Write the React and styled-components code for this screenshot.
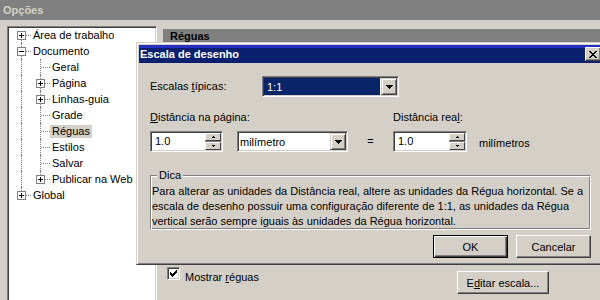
import styled, { createGlobalStyle, css } from "styled-components";

const GlobalStyle = createGlobalStyle`
  html, body {
    margin: 0;
    padding: 0;
    background: #d4d0c8;
  }
  body {
    font-family: "Liberation Sans", Arial, sans-serif;
    font-size: 11px;
    color: #000;
  }
`;

const raised = css`
  border: 1px solid;
  border-color: #fff #404040 #404040 #fff;
  box-shadow: inset -1px -1px #808080;
`;

const sunken = css`
  border: 1px solid;
  border-color: #808080 #fff #fff #808080;
  box-shadow: inset 1px 1px #404040, inset -1px -1px #d4d0c8;
`;

const Screen = styled.div`
  position: relative;
  width: 600px;
  height: 300px;
  overflow: hidden;
  background: #d4d0c8;
  display: flex;
  flex-direction: column;
`;

const WindowTitle = styled.div`
  flex-shrink: 0;
  height: 20px;
  padding-left: 3px;
  display: flex;
  align-items: center;
  background: #808080;
  color: #d4d0c8;
  font-weight: bold;
`;

const WindowBody = styled.div`
  flex: 1;
  min-height: 0;
  display: flex;
  gap: 6px;
  padding: 6px 0 0 7px;
`;

const Tree = styled.div`
  box-sizing: border-box;
  flex-shrink: 0;
  width: 150px;
  height: 290px;
  padding: 0 0 0 4px;
  background: #fff;
  ${sunken};
`;

const TreeRow = styled.div`
  display: flex;
  align-items: center;
  height: 16px;
`;

const TreeCell = styled.div`
  position: relative;
  flex-shrink: 0;
  width: 19px;
  height: 16px;
  display: flex;
  align-items: center;
  justify-content: center;

  &::before {
    content: "";
    display: ${(p) => (p.$up || p.$down ? "block" : "none")};
    position: absolute;
    left: 9px;
    top: ${(p) => (p.$up ? 0 : 8)}px;
    bottom: ${(p) => (p.$down ? 0 : 8)}px;
    border-left: 1px dotted #808080;
  }

  &::after {
    content: "";
    display: ${(p) => (p.$branch ? "block" : "none")};
    position: absolute;
    left: 10px;
    right: 0;
    top: 8px;
    border-top: 1px dotted #808080;
  }

  svg {
    position: relative;
    z-index: 1;
  }
`;

const TreeLabel = styled.span`
  padding: 0 2px;
  line-height: 13px;
  white-space: nowrap;
  background: ${(p) => (p.$selected ? "#d4d0c8" : "transparent")};
`;

const RightPane = styled.div`
  flex: 1;
  min-width: 0;
  padding-top: 3px;
  display: flex;
  flex-direction: column;
`;

const PaneHeader = styled.div`
  height: 14px;
  padding-left: 7px;
  display: flex;
  align-items: center;
  background: #808080;
  font-weight: bold;
`;

const PaneContent = styled.div`
  height: 224px;
`;

const PaneFooter = styled.div`
  display: flex;
  align-items: flex-start;
  padding-left: 4px;
`;

const CheckRow = styled.label`
  display: flex;
  align-items: flex-start;
  gap: 5px;
`;

const CheckBox = styled.span`
  box-sizing: border-box;
  width: 13px;
  height: 13px;
  display: flex;
  align-items: center;
  justify-content: center;
  background: #fff;
  ${sunken};
`;

const CheckText = styled.span`
  margin-top: 4px;
  line-height: 13px;
`;

const Button = styled.button`
  box-sizing: border-box;
  width: ${(p) => p.$w || 75}px;
  height: 23px;
  padding: 0;
  margin: ${(p) => p.$margin || 0};
  background: #d4d0c8;
  color: #000;
  font: 11px "Liberation Sans", Arial, sans-serif;
  border: 1px solid;
  border-color: ${(p) => (p.$default ? "#000" : "#fff #404040 #404040 #fff")};
  box-shadow: ${(p) =>
    p.$default
      ? "inset 1px 1px #fff, inset -1px -1px #404040, inset -2px -2px #808080"
      : "inset -1px -1px #808080"};
`;

const Dialog = styled.div`
  position: absolute;
  left: 136px;
  top: 42px;
  box-sizing: border-box;
  width: 470px;
  height: 223px;
  padding: 2px;
  background: #d4d0c8;
  border: 1px solid;
  border-color: #d4d0c8 #404040 #404040 #d4d0c8;
  box-shadow: inset 1px 1px #fff, inset -1px -1px #808080;
  display: flex;
  flex-direction: column;
`;

const DialogTitle = styled.div`
  height: 18px;
  padding: 0 2px 0 1px;
  display: flex;
  align-items: center;
  justify-content: space-between;
  background: linear-gradient(#2430c4 0 3px, #0a1f6e 3px);
  color: #fff;
  font-weight: bold;
`;

const CloseButton = styled.span`
  box-sizing: border-box;
  width: 16px;
  height: 14px;
  display: flex;
  align-items: center;
  justify-content: center;
  background: #d4d0c8;
  ${raised};
`;

const DialogBody = styled.div`
  padding: 13px 12px 0 11px;
  display: flex;
  flex-direction: column;
`;

const ScaleRow = styled.div`
  display: flex;
  align-items: center;
  height: 21px;
`;

const FieldLabel = styled.div`
  width: ${(p) => (p.$w ? `${p.$w}px` : "auto")};
  line-height: 13px;
  margin-bottom: ${(p) => p.$below || 0}px;
  white-space: nowrap;
`;

const DistanceRow = styled.div`
  display: flex;
  align-items: flex-end;
  margin-top: 14px;
`;

const DistGroup = styled.div`
  width: ${(p) => (p.$w ? `${p.$w}px` : "auto")};
  display: flex;
  flex-direction: column;
`;

const Controls = styled.div`
  display: flex;
  align-items: center;
  gap: ${(p) => p.$gap || 0}px;
`;

const Equals = styled.div`
  width: 45px;
  height: 21px;
  line-height: 21px;
  text-align: center;
`;

const Units = styled.span`
  margin: 2px 0 0 12px;
`;

const Combo = styled.div`
  box-sizing: border-box;
  width: ${(p) => p.$w}px;
  height: 21px;
  padding: 1px;
  display: flex;
  background: #fff;
  ${sunken};
`;

const ComboValue = styled.div`
  flex: 1;
  margin-right: ${(p) => (p.$selected ? 1 : 0)}px;
  padding-left: ${(p) => p.$pad}px;
  display: flex;
  align-items: center;
  background: ${(p) => (p.$selected ? "#0a246a" : "#fff")};
  color: ${(p) => (p.$selected ? "#fff" : "#000")};
`;

const DropButton = styled.div`
  box-sizing: border-box;
  width: 16px;
  height: 17px;
  display: flex;
  align-items: center;
  justify-content: center;
  background: #d4d0c8;
  border: 1px solid;
  border-color: #d4d0c8 #404040 #404040 #d4d0c8;
  box-shadow: inset 1px 1px #fff, inset -1px -1px #808080;
`;

const Spinner = styled.div`
  box-sizing: border-box;
  width: ${(p) => p.$w}px;
  height: 21px;
  padding: 1px;
  display: flex;
  background: #fff;
  ${sunken};
`;

const SpinValue = styled.div`
  flex: 1;
  padding: 2px 0 0 3px;
  line-height: 13px;
`;

const SpinButtons = styled.div`
  width: 16px;
  display: flex;
  flex-direction: column;
  justify-content: space-between;
  background: #808080;
`;

const SpinButton = styled.div`
  box-sizing: border-box;
  height: ${(p) => p.$h}px;
  display: flex;
  align-items: center;
  justify-content: center;
  background: #d4d0c8;
  border: 1px solid;
  border-color: #fff #404040 #404040 #fff;
`;

const GroupBox = styled.div`
  margin-top: 23px;
  padding: 0 1px 0 1px;
  border: 1px solid;
  border-color: #808080 #fff #fff #808080;
  box-shadow: inset 1px 1px #fff, inset -1px -1px #808080;
  display: flex;
  flex-direction: column;
`;

const GroupLegend = styled.span`
  align-self: flex-start;
  margin: -7px 0 0 5px;
  padding: 0 2px;
  line-height: 13px;
  background: #d4d0c8;
`;

const GroupText = styled.p`
  margin: 0;
  padding-top: 2px;
  line-height: 15px;
  white-space: nowrap;
`;

const ButtonRow = styled.div`
  margin-top: 5px;
  display: flex;
  justify-content: flex-end;
  gap: 8px;
`;

const Pixels = ({ w, h, d, fill = "#000" }) => (
  <svg width={w} height={h} viewBox={`0 0 ${w} ${h}`} shapeRendering="crispEdges">
    <path d={d} fill={fill} />
  </svg>
);

const CloseGlyph = () => (
  <Pixels
    w={8}
    h={7}
    d="M0 0h2v1H0z M6 0h2v1H6z M1 1h2v1H1z M5 1h2v1H5z M2 2h4v1H2z M3 3h2v1H3z M2 4h4v1H2z M1 5h2v1H1z M5 5h2v1H5z M0 6h2v1H0z M6 6h2v1H6z"
  />
);

const CheckGlyph = () => (
  <Pixels
    w={7}
    h={7}
    d="M6 0h1v1H6z M5 1h2v1H5z M0 2h1v1H0z M4 2h3v1H4z M0 3h2v1H0z M3 3h3v1H3z M0 4h5v1H0z M1 5h3v1H1z M2 6h1v1H2z"
  />
);

const DownArrow = () => (
  <Pixels w={7} h={4} d="M0 0h7v1H0z M1 1h5v1H1z M2 2h3v1H2z M3 3h1v1H3z" />
);

const SpinUp = () => <Pixels w={3} h={2} d="M1 0h1v1H1z M0 1h3v1H0z" />;
const SpinDown = () => <Pixels w={3} h={2} d="M0 0h3v1H0z M1 1h1v1H1z" />;

const ExpandBox = ({ open }) => (
  <svg width="9" height="9" viewBox="0 0 9 9" shapeRendering="crispEdges">
    <rect x="0.5" y="0.5" width="8" height="8" fill="#fff" stroke="#808080" />
    <rect x="2" y="4" width="5" height="1" fill="#000" />
    {!open && <rect x="4" y="2" width="1" height="5" fill="#000" />}
  </svg>
);

const treeItems = [
  { label: "Área de trabalho", level: 0, box: "plus", up: false, down: true },
  { label: "Documento", level: 0, box: "minus", up: true, down: true },
  { label: "Geral", level: 1, up: true, down: true },
  { label: "Página", level: 1, box: "plus", up: true, down: true },
  { label: "Linhas-guia", level: 1, box: "plus", up: true, down: true },
  { label: "Grade", level: 1, up: true, down: true },
  { label: "Réguas", level: 1, up: true, down: true, selected: true },
  { label: "Estilos", level: 1, up: true, down: true },
  { label: "Salvar", level: 1, up: true, down: true },
  { label: "Publicar na Web", level: 1, box: "plus", up: true, down: false },
  { label: "Global", level: 0, box: "plus", up: true, down: false },
];

function Combobox({ width, value, selected, pad }) {
  return (
    <Combo $w={width}>
      <ComboValue $selected={selected} $pad={pad}>
        {value}
      </ComboValue>
      <DropButton>
        <DownArrow />
      </DropButton>
    </Combo>
  );
}

function SpinBox({ width, value }) {
  return (
    <Spinner $w={width}>
      <SpinValue>{value}</SpinValue>
      <SpinButtons>
        <SpinButton $h={8}>
          <SpinUp />
        </SpinButton>
        <SpinButton $h={8}>
          <SpinDown />
        </SpinButton>
      </SpinButtons>
    </Spinner>
  );
}

export default function App() {
  return (
    <>
      <GlobalStyle />
      <Screen>
        <WindowTitle>Opções</WindowTitle>
        <WindowBody>
          <Tree>
            {treeItems.map((item) => (
              <TreeRow key={item.label}>
                {item.level === 1 && <TreeCell $up $down />}
                <TreeCell $up={item.up} $down={item.down} $branch>
                  {item.box && <ExpandBox open={item.box === "minus"} />}
                </TreeCell>
                <TreeLabel $selected={item.selected}>{item.label}</TreeLabel>
              </TreeRow>
            ))}
          </Tree>
          <RightPane>
            <PaneHeader>Réguas</PaneHeader>
            <PaneContent />
            <PaneFooter>
              <CheckRow>
                <CheckBox>
                  <CheckGlyph />
                </CheckBox>
                <CheckText>
                  Mostrar <u>r</u>éguas
                </CheckText>
              </CheckRow>
              <Button $w={92} $margin="4px 51px 0 auto">
                E<u>d</u>itar escala...
              </Button>
            </PaneFooter>
          </RightPane>
        </WindowBody>

        <Dialog>
          <DialogTitle>
            <span>Escala de desenho</span>
            <CloseButton>
              <CloseGlyph />
            </CloseButton>
          </DialogTitle>
          <DialogBody>
            <ScaleRow>
              <FieldLabel $w={112}>
                Escalas <u>t</u>ípicas:
              </FieldLabel>
              <Combobox width={137} value="1:1" selected pad={3} />
            </ScaleRow>

            <DistanceRow>
              <DistGroup $w={198}>
                <FieldLabel $below={7}>
                  <u>D</u>istância na página:
                </FieldLabel>
                <Controls $gap={14}>
                  <SpinBox width={73} value="1.0" />
                  <Combobox width={111} value="milímetro" pad={1} />
                </Controls>
              </DistGroup>
              <Equals>=</Equals>
              <DistGroup>
                <FieldLabel $below={7}>
                  Distância rea<u>l</u>:
                </FieldLabel>
                <Controls>
                  <SpinBox width={74} value="1.0" />
                  <Units>milímetros</Units>
                </Controls>
              </DistGroup>
            </DistanceRow>

            <GroupBox>
              <GroupLegend>Dica</GroupLegend>
              <GroupText>
                Para alterar as unidades da Distância real, altere as unidades da Régua horizontal. Se a
                <br />
                escala de desenho possuir uma configuração diferente de 1:1, as unidades da Régua
                <br />
                vertical serão sempre iguais às unidades da Régua horizontal.
              </GroupText>
            </GroupBox>

            <ButtonRow>
              <Button $default>OK</Button>
              <Button>Cancelar</Button>
            </ButtonRow>
          </DialogBody>
        </Dialog>
      </Screen>
    </>
  );
}
